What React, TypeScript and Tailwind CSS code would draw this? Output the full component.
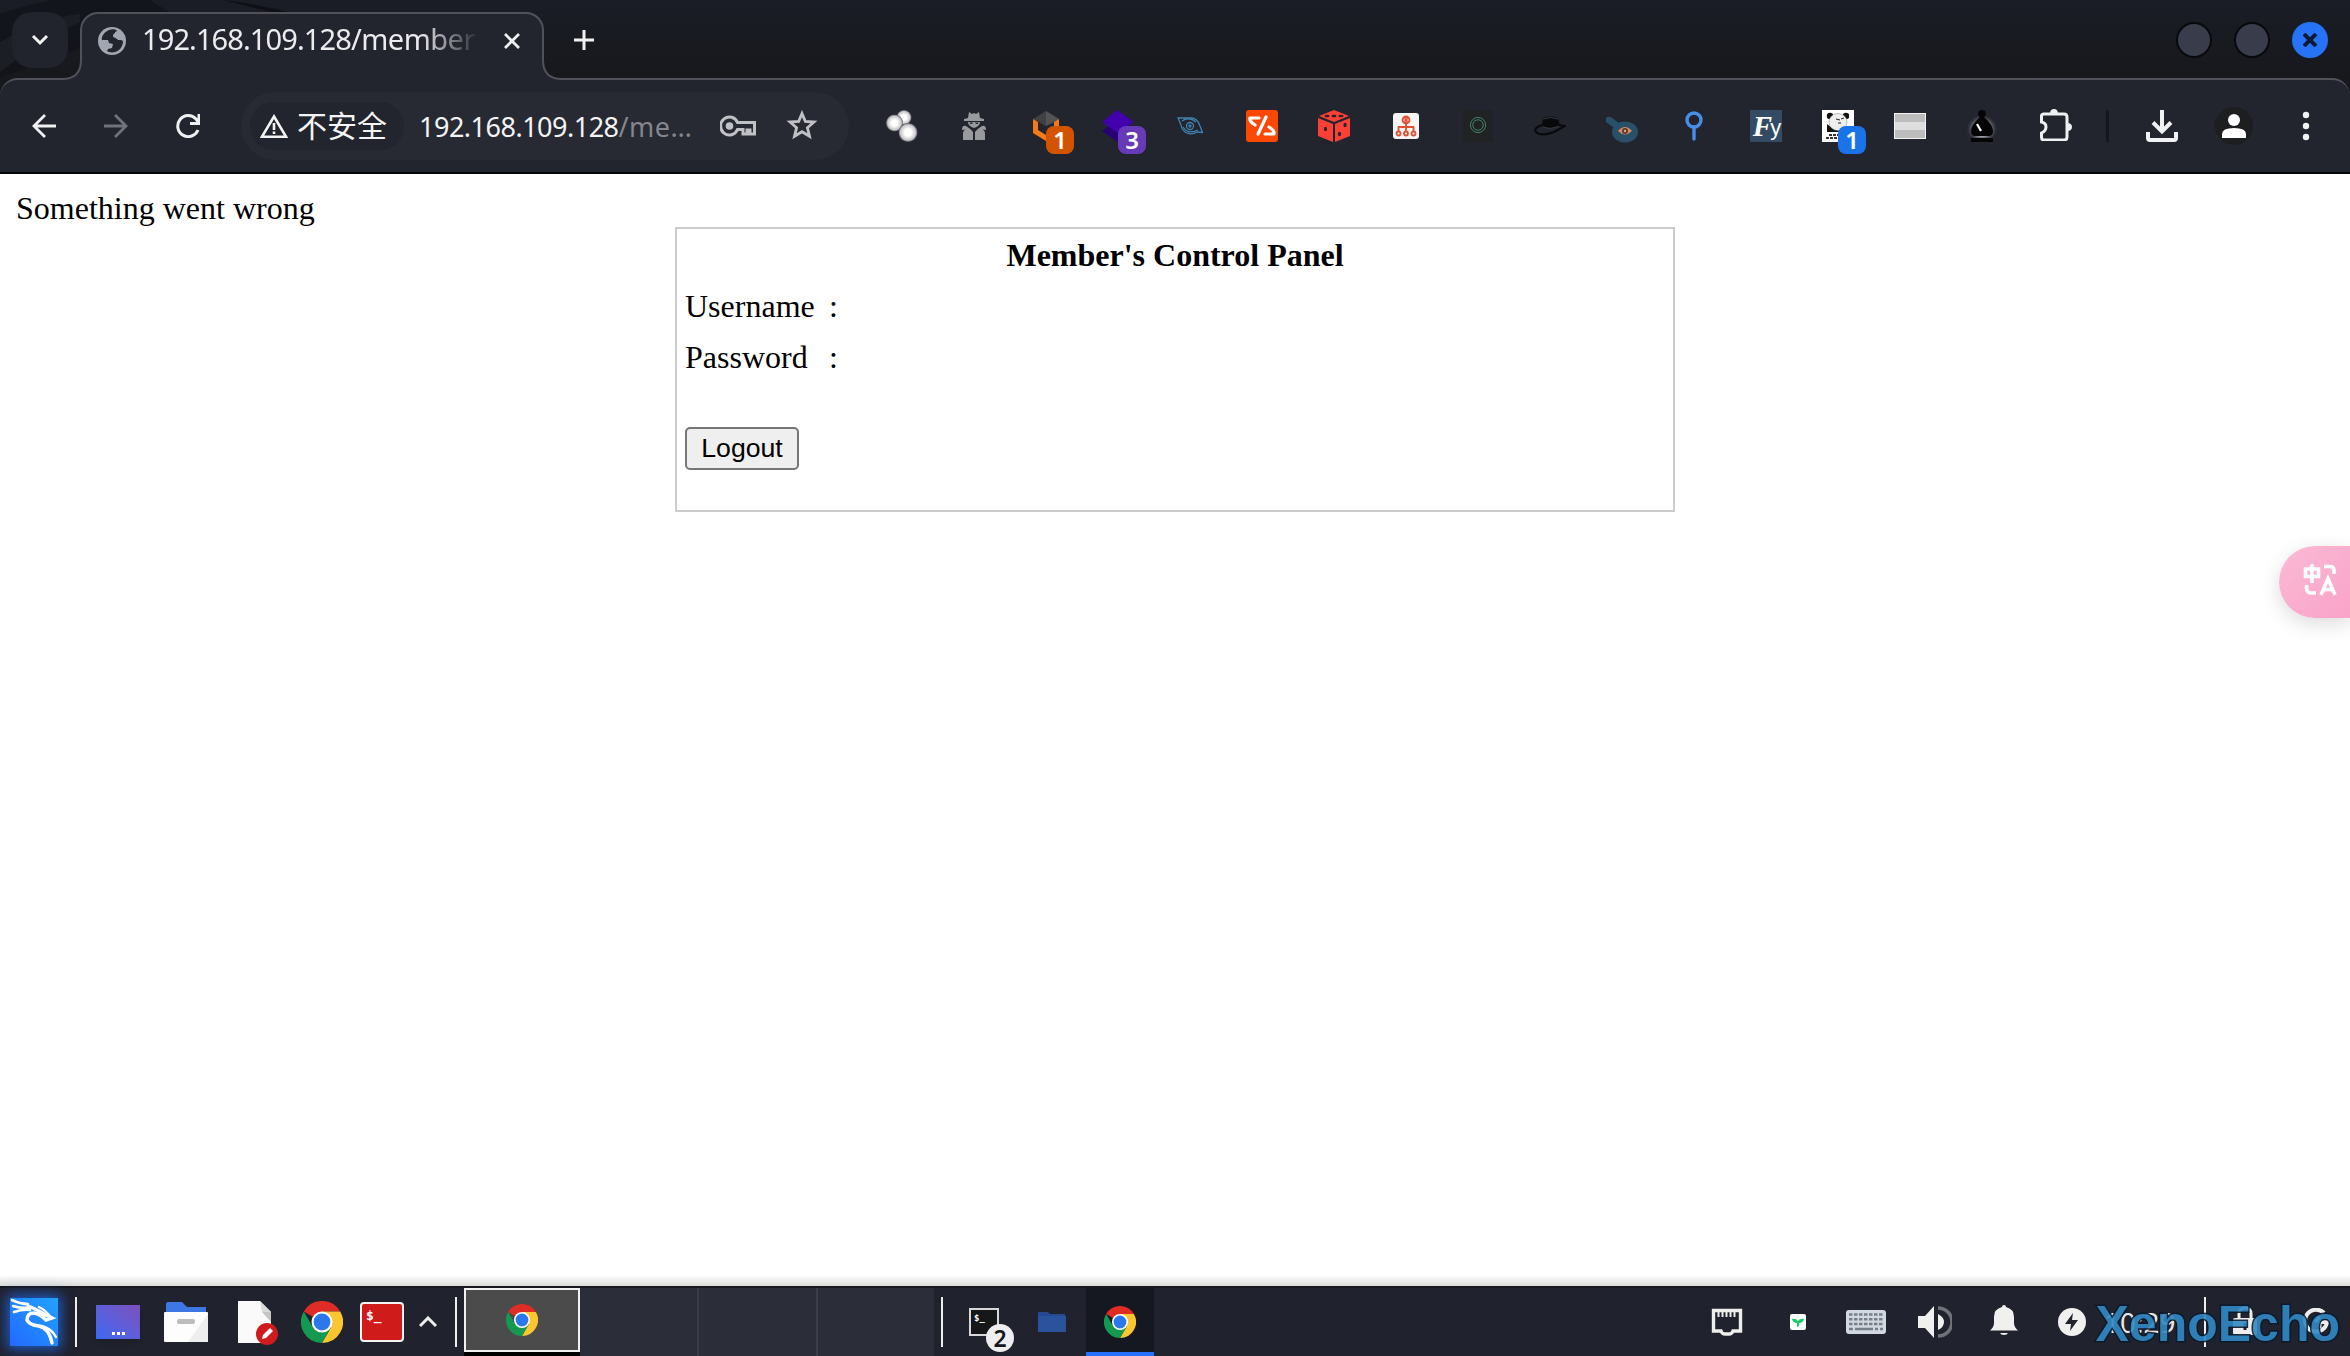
import type { ReactNode } from "react";

const UI = "font-['Noto_Sans','Noto_Sans_CJK_SC',sans-serif]";

function ChromeLogo({ className }: { className: string }) {
  return (
    <svg viewBox="0 0 48 48" className={className}>
      <path d="M24 24 L3.2 12 A24 24 0 0 1 44.8 12 L24 12Z" fill="#df2c25" />
      <path d="M44.8 12 A24 24 0 0 1 24 48 L34.4 30 L24 12Z" fill="#fdc52f" />
      <path d="M24 48 A24 24 0 0 1 3.2 12 L13.6 30 L34.4 30Z" fill="#149a50" />
      <circle cx="24" cy="24" r="12" fill="#fff" />
      <circle cx="24" cy="24" r="9.6" fill="#2b78ec" />
    </svg>
  );
}

function Slot({ children }: { children: ReactNode }) {
  return <div className="relative flex h-9 w-[72px] shrink-0 items-center justify-center">{children}</div>;
}

function Badge({ text, className }: { text: string; className: string }) {
  return (
    <span className={`absolute left-[36px] top-[18px] flex h-7 w-7 items-center justify-center rounded-lg text-[24px] font-semibold leading-none text-white ${className}`}>
      {text}
    </span>
  );
}

function TabStrip() {
  return (
    <header className="relative flex h-[78px] items-start overflow-visible bg-gradient-to-b from-[#1a1d26] to-[#17181c] pl-3 pt-3">
      <svg viewBox="0 0 330 78" className="absolute left-0 top-0 h-[78px] w-[330px]">
        <path d="M0 14 Q80 -14 150 0 L172 14 L0 78Z" fill="#111219" opacity="0.7" />
        <path d="M0 42 Q40 18 80 14 L80 22 Q40 40 0 72Z" fill="#20222a" opacity="0.7" />
        <path d="M222 0 Q262 4 294 14 L270 12 Q240 4 222 0Z" fill="#0f1015" />
      </svg>
      <button className="relative flex h-14 w-14 items-center justify-center rounded-[20px] bg-[#22242d]">
        <svg viewBox="0 0 18 12" className="h-3 w-[18px]" fill="none" stroke="#f1f1f1" strokeWidth="3">
          <path d="M2 2l7 7 7-7" />
        </svg>
      </button>
      <div className="relative z-10 ml-3 flex h-[68px] w-[464px] items-center rounded-t-[18px] border-2 border-b-0 border-[#515259] bg-[#22242e] pb-[13px] pl-4">
        <svg viewBox="0 0 20 20" className="absolute -left-[20px] bottom-0 h-5 w-5">
          <path d="M20 0 H22 V20 H0 V19 Q19 19 19 0Z" fill="#22242e" />
          <path d="M0 19 Q19 19 19 0" fill="none" stroke="#515259" strokeWidth="2" />
        </svg>
        <svg viewBox="0 0 20 20" className="absolute -right-[20px] bottom-0 h-5 w-5">
          <path d="M0 0 H1 Q1 19 20 19 V20 H0Z" fill="#22242e" />
          <path d="M1 0 Q1 19 20 19" fill="none" stroke="#515259" strokeWidth="2" />
        </svg>
        <svg viewBox="0 0 28 28" className="h-7 w-7 shrink-0">
          <circle cx="14" cy="14" r="14" fill="#a2a6b1" />
          <path d="M11 3 C14 2 18 2 19 4 C18 6 15 6 15 9 C15 11 17 10 19 12 C20 14 23 12 25 14 C25 20 21 24 17 25 C14 26 10 25 9 24 L10 22 L14 21 L15 17 L11 16 L10 13 L4 13 C3 10 6 5 11 3Z" fill="#22242e" />
          <path d="M17 5 L20 4 L22 7 L20 9 L17 9Z" fill="#a2a6b1" />
        </svg>
        <span className="-mt-[3px] ml-[16px] w-[338px] whitespace-nowrap text-[29px] leading-[40px] text-[#ececee] [mask-image:linear-gradient(to_right,black_82%,transparent_100%)]">
          <span className="tracking-[-0.9px]">192.168.109.128</span>
          <span className="tracking-[-0.5px]">/member</span>
        </span>
        <svg viewBox="0 0 16 16" className="ml-6 h-4 w-4 shrink-0" stroke="#f1f1f1" strokeWidth="2.8">
          <path d="M1 1l14 14M15 1L1 15" />
        </svg>
      </div>
      <svg viewBox="0 0 20 20" className="ml-[30px] mt-[18px] h-5 w-5" stroke="#f1f1f1" strokeWidth="3">
        <path d="M10 0v20M0 10h20" />
      </svg>
      <div className="ml-auto mr-[22px] mt-[10px] flex gap-[22px]">
        <span className="h-9 w-9 rounded-full border-2 border-[#08090c] bg-[#393d4b]" />
        <span className="h-9 w-9 rounded-full border-2 border-[#08090c] bg-[#393d4b]" />
        <span className="flex h-9 w-9 items-center justify-center rounded-full bg-[#2673f8]">
          <svg viewBox="0 0 14 14" className="h-[14px] w-[14px]" stroke="#0c1a35" strokeWidth="4">
            <path d="M1 1l12 12M13 1L1 13" />
          </svg>
        </span>
      </div>
    </header>
  );
}

function Extensions() {
  return (
    <div className="ml-[17px] flex">
      <Slot>
        <svg viewBox="0 0 32 32" className="h-8 w-8">
          <defs>
            <radialGradient id="ball">
              <stop offset="0.35" stopColor="#fff" />
              <stop offset="0.8" stopColor="#c9c9c9" />
              <stop offset="1" stopColor="#55565e" />
            </radialGradient>
          </defs>
          <circle cx="18" cy="7.500" r="7.500" fill="url(#ball)" />
          <circle cx="8.500" cy="13" r="8.500" fill="url(#ball)" />
          <circle cx="22" cy="22.500" r="9.500" fill="url(#ball)" />
        </svg>
      </Slot>
      <Slot>
        <svg viewBox="0 0 26 28" className="h-7 w-[26px]" fill="#999a9d">
          <path d="M7 6 L8 0 L11 2 L13 1 L15 2 L18 0 L19 6 L23 7 V9 H3 V7Z" />
          <path d="M7 10 H19 Q19 14 13 16 Q7 14 7 10Z" />
          <path d="M2 28 V22 Q2 18 5 17.500 L1 18 Q1 13 5 14 Q10 17 12 20 V28Z M24 28 V22 Q24 18 21 17.500 L25 18 Q25 13 21 14 Q16 17 14 20 V28Z" />
          <path d="M8.500 10.500h3.500l-1 1.500H9.500zM14 10.500h3.500l-1 1.500h-1.500z" fill="#22242e" />
        </svg>
      </Slot>
      <Slot>
        <svg viewBox="0 0 26 30" className="h-[30px] w-[26px]">
          <path d="M13 0 L26 8 L20 12 L13 15 L0 8Z" fill="#3f4143" />
          <path d="M13 0 V15 L26 8Z" fill="#515355" />
          <path d="M0 8 L5 11 V19 L13 24 V30 L0 22Z M26 8 L21 11 V19 L13 24 V30 L26 22Z" fill="#f67a17" />
        </svg>
        <Badge text="1" className="bg-[#d35400]" />
      </Slot>
      <Slot>
        <svg viewBox="0 0 32 32" className="h-8 w-8">
          <path d="M0 21 L16 10 L32 21 L16 32Z" fill="#290076" />
          <path d="M0 12 L15 0 L32 12 L16 23Z" fill="#4300ad" />
        </svg>
        <Badge text="3" className="bg-[#673ab7]" />
      </Slot>
      <Slot>
        <svg viewBox="0 0 26 18" className="h-[18px] w-[26px]" fill="none" stroke="#4083ae" strokeWidth="1.300">
          <path d="M1 1 H15 Q21 2 23 9 L25.500 15.500 L20 15 Q15 18 10 16 Q5 14 4 8Z" />
          <path d="M5 4 Q12 -1 19 5 M6 10 Q11 18 21 13" />
          <circle cx="13" cy="9" r="3.500" />
          <circle cx="13" cy="9" r="1" />
        </svg>
      </Slot>
      <Slot>
        <svg viewBox="0 0 32 32" className="h-8 w-8">
          <rect width="32" height="32" rx="3" fill="#fb4805" />
          <path d="M13 8 H4 Q3 11 9 15 M20 7 L12 24 M23 17 Q29 21 28 24 H19" fill="none" stroke="#fff" strokeWidth="3.200" strokeLinecap="round" strokeLinejoin="round" />
        </svg>
      </Slot>
      <Slot>
        <svg viewBox="0 0 32 32" className="h-8 w-8">
          <path d="M16 0 L31 6 L16 12 L1 6Z M0 8 L15 14 V32 L0 26Z M32 8 L17 14 V32 L32 26Z" fill="#fb4135" />
          <g fill="#22242e">
            <ellipse cx="9" cy="6" rx="2.500" ry="1.200" />
            <ellipse cx="16" cy="6" rx="2.500" ry="1.200" />
            <ellipse cx="23" cy="6" rx="2.500" ry="1.200" />
            <ellipse cx="7.500" cy="19" rx="1.600" ry="2.200" />
            <ellipse cx="21.500" cy="24" rx="1.600" ry="2.200" />
            <ellipse cx="27" cy="15" rx="1.600" ry="2.200" />
          </g>
        </svg>
      </Slot>
      <Slot>
        <svg viewBox="0 0 28 28" className="h-[28px] w-[28px]">
          <rect x="1" y="1" width="26" height="26" rx="3" fill="#f5f5f5" />
          <g fill="none" stroke="#e05136" strokeWidth="1.800">
            <circle cx="14" cy="8" r="3.500" fill="#e05136" />
            <path d="M14 11 V20 M6.500 20 V15 H21.500 V20" />
            <circle cx="6.500" cy="21.500" r="2" />
            <circle cx="14" cy="21.500" r="2" />
            <circle cx="21.500" cy="21.500" r="2" />
          </g>
          <path d="M13 6.500l-1.500 1.500 1.500 1.500M15 6.500l1.500 1.500-1.500 1.500" fill="none" stroke="#fff" strokeWidth="0.800" />
        </svg>
      </Slot>
      <Slot>
        <svg viewBox="0 0 30 32" className="h-8 w-[30px]" fill="none">
          <rect width="30" height="32" rx="3" fill="#202223" />
          <circle cx="15" cy="15" r="7.600" stroke="#438269" />
          <circle cx="15" cy="15" r="5.200" stroke="#438269" />
        </svg>
      </Slot>
      <Slot>
        <svg viewBox="0 0 32 20" className="h-5 w-8">
          <path d="M8 10 L9 2 Q17 -1 24 2 L26 10 Q16 14 8 10Z" fill="#08090b" />
          <path d="M8 9 Q-1 12 2 16 Q7 21 20 16 L31 10 L25 9" fill="none" stroke="#08090b" strokeWidth="2" />
          <path d="M9 3 Q17 0 24 3 M9 11 Q17 14 25 10" fill="none" stroke="#3c3e45" strokeWidth="0.900" />
        </svg>
      </Slot>
      <Slot>
        <svg viewBox="0 0 32 26" className="mt-2 h-[26px] w-8">
          <path d="M3 3 L10 8" stroke="#285069" strokeWidth="7" strokeLinecap="round" />
          <ellipse cx="19" cy="15" rx="13" ry="10.500" fill="#285069" />
          <path d="M12 14 Q19 6 26 14 Q19 21 12 14Z" fill="#d28a63" />
          <circle cx="19" cy="14" r="3" fill="#5b3a2c" />
          <circle cx="19" cy="14" r="1.200" fill="#eaa27c" />
        </svg>
      </Slot>
      <Slot>
        <svg viewBox="0 0 20 30" className="h-[30px] w-5" fill="none" stroke="#478ee6" strokeWidth="3.400" strokeLinecap="round">
          <circle cx="10" cy="9" r="7" />
          <path d="M10 16v12" />
        </svg>
      </Slot>
      <Slot>
        <span className="flex h-8 w-8 items-center justify-center bg-[#334b63] font-['Liberation_Serif',serif] text-[29px] font-bold italic leading-none tracking-[-2px] text-white">
          F<span className="mt-1 font-['Liberation_Sans',sans-serif] text-[22px] font-normal not-italic">y</span>
        </span>
      </Slot>
      <Slot>
        <svg viewBox="0 0 32 32" className="h-8 w-8">
          <rect width="32" height="32" fill="#fff" />
          <path d="M5 14 L10 18 L14 20 L22 18 V22 H5Z" fill="#111" />
          <circle cx="8" cy="6" r="3.200" fill="#111" />
          <circle cx="24" cy="6" r="3.200" fill="#111" />
          <ellipse cx="16" cy="12" rx="9" ry="8.500" fill="#eee" stroke="#999" strokeWidth="0.600" />
          <path d="M14 9l4 1M19 9l3-1M16 13h3" stroke="#222" />
          <path d="M7 25h18M4 28h22" stroke="#333" strokeWidth="1.800" strokeDasharray="3 1" />
        </svg>
        <Badge text="1" className="bg-[#1a73e8]" />
      </Slot>
      <Slot>
        <div className="flex h-[26px] w-8 flex-col border border-[#f2f2f2] bg-[#dedede]">
          <span className="h-2 bg-[#bdbdbd]" />
          <span className="mt-auto h-2 bg-[#bdbdbd]" />
        </div>
      </Slot>
      <Slot>
        <svg viewBox="0 0 32 36" className="h-9 w-8">
          <defs>
            <radialGradient id="halo">
              <stop offset="0.45" stopColor="#b7b8bb" />
              <stop offset="1" stopColor="#22242e" stopOpacity="0" />
            </radialGradient>
          </defs>
          <ellipse cx="16" cy="21" rx="16" ry="15" fill="url(#halo)" />
          <path d="M16 2 Q20 2 20 6 Q20 8 18 9 Q27 17 27 23 Q27 28 23 28 H9 Q5 28 5 23 Q5 17 14 9 Q12 8 12 6 Q12 2 16 2Z" fill="#050506" />
          <path d="M11 16l4 7" stroke="#fff" strokeWidth="2.200" />
          <path d="M5 32h22" stroke="#050506" strokeWidth="4" />
        </svg>
      </Slot>
      <Slot>
        <svg viewBox="0 0 32 32" className="mb-0.5 ml-1 h-8 w-8">
          <path d="M10 5 Q10 0 14 0 Q18 0 18 5Z M27 14 Q32 14 32 18 Q32 22 27 22Z" fill="#eef0f2" />
          <path d="M3 5 H24 Q27 5 27 8 V28 Q27 31 24 31 H4 Q1.500 31 1.500 28 V24 Q6 22 6 18 Q6 14 1.500 13 V7 Q1.500 5 4 5Z" fill="none" stroke="#eef0f2" strokeWidth="3" />
        </svg>
      </Slot>
    </div>
  );
}

function Toolbar() {
  return (
    <div className="bg-[#17181c]">
      <nav className="flex h-[96px] items-center rounded-t-[18px] border-b-2 border-t-2 border-b-[#050608] border-t-[#515259] bg-[#22242e] pl-8">
        <svg viewBox="0 0 24 24" className="h-6 w-6" fill="none" stroke="#eef0f2" strokeWidth="2.800">
          <path d="M24 12H3M13 1L2 12l11 11" />
        </svg>
        <svg viewBox="0 0 24 24" className="ml-12 h-6 w-6" fill="none" stroke="#71737a" strokeWidth="2.800">
          <path d="M0 12h21M11 1l11 11-11 11" />
        </svg>
        <svg viewBox="0 0 24 24" className="ml-12 h-6 w-6" fill="none" stroke="#eef0f2" strokeWidth="3">
          <path d="M22 16A10.500 10.500 0 1 1 20 5L23 9M23 0v9.500h-9" />
        </svg>
        <div className="ml-[41px] flex h-[68px] w-[608px] items-center rounded-full bg-[#272933] pl-[9px]">
          <div className="flex h-12 w-[154px] items-center rounded-full bg-[#22242e] pl-[10px]">
            <svg viewBox="0 0 28 24" className="h-6 w-7 shrink-0" fill="none" stroke="#f4f4f4" strokeWidth="2.600">
              <path d="M14 2.500L26 22.700H2z" />
              <path d="M14 9v7M14 17.500v2.500" />
            </svg>
            <span className="-mt-1 ml-[9px] whitespace-nowrap font-['Noto_Sans_CJK_SC',sans-serif] text-[30px] leading-none text-[#f4f4f4]">不安全</span>
          </div>
          <span className="ml-[15px] w-[280px] whitespace-nowrap text-[27px] leading-none text-[#f4f4f4]">
            <span className="tracking-[-0.5px]">192.168.109.128</span>
            <span className="tracking-[0.5px] text-[#85868d]">/me…</span>
          </span>
          <svg viewBox="0 0 36 22" className="ml-[21px] h-[22px] w-9" fill="none" stroke="#c0c1c5" strokeWidth="3">
            <path d="M17.500 7.500A8.800 9 0 1 0 17.500 14.500H23V19H27V15H30V19H34.500V7.500Z" />
            <circle cx="9.500" cy="11" r="3.800" fill="#c0c1c5" stroke="none" />
          </svg>
          <svg viewBox="0 0 32 30" className="-mt-0.5 ml-[30px] h-[30px] w-8" fill="none" stroke="#c0c1c5" strokeWidth="2.800">
            <path d="M16 3.500L19.300 11.300L28 12L21.400 17.700L23.500 26.300L16 21.700L8.500 26.300L10.600 17.700L4 12L12.700 11.300Z" />
          </svg>
        </div>
        <Extensions />
        <span className="ml-4 h-8 w-[3px] bg-[#14161e]" />
        <svg viewBox="0 0 32 32" className="ml-[37px] h-8 w-8" fill="none" stroke="#f1f2f3" strokeWidth="4">
          <path d="M16 0v21M7 12.500l9 9 9-9M2 22v6q0 2 2 2h24q2 0 2-2v-6" />
        </svg>
        <span className="ml-[37px] flex h-[38px] w-[38px] items-center justify-center rounded-full bg-[#1d1e1f]">
          <svg viewBox="0 0 24 24" className="h-6 w-6" fill="#fff">
            <circle cx="12" cy="6" r="6" />
            <path d="M0 24v-4q0-6 12-6t12 6v4z" />
          </svg>
        </span>
        <svg viewBox="0 0 8 30" className="ml-[49px] h-[30px] w-2" fill="#f1f2f3">
          <circle cx="4" cy="4" r="3.200" />
          <circle cx="4" cy="15" r="3.200" />
          <circle cx="4" cy="26" r="3.200" />
        </svg>
      </nav>
    </div>
  );
}

function Page() {
  return (
    <main className="relative h-[1112px] bg-white px-4 pt-4 font-['Liberation_Serif',serif] text-[32px] leading-[37px] text-black">
      <p>Something went wrong</p>
      <section className="mx-auto h-[285px] w-[1000px] border-2 border-[#ccc] px-2 pt-2">
        <h1 className="text-center font-bold">Member&apos;s Control Panel</h1>
        <div className="mt-[14px] flex">
          <span className="w-[144px]">Username</span>
          <span>:</span>
        </div>
        <div className="mt-[14px] flex">
          <span className="w-[144px]">Password</span>
          <span>:</span>
        </div>
        <button className="mt-[51px] flex h-[43px] w-[114px] items-center justify-center rounded-[5px] border-2 border-[#767676] bg-[#efefef] font-['Liberation_Sans',sans-serif] text-[26.670px] leading-none">
          Logout
        </button>
      </section>
      <div className="absolute right-0 top-[372px] flex h-[72px] w-[71px] items-center rounded-l-full bg-gradient-to-br from-[#fbbad6] to-[#f9a3c8] pb-1 pl-6 shadow-[0_6px_20px_rgba(0,0,0,0.14)]">
        <svg viewBox="0 0 34 34" className="h-[34px] w-[34px]" fill="none" stroke="#fff" strokeWidth="3.600">
          <path d="M2.500 6H15.500V13.500H2.500ZM9 1V20" />
          <path d="M21 3.500h6q4 0 4 4V11M3.500 22v3q0 5 5 5H13" />
          <path d="M18 32L25 15.500L32 32M20.500 26.500h9" />
        </svg>
      </div>
      <div className="absolute inset-x-0 bottom-0 h-[11px] bg-gradient-to-b from-transparent to-[#d9dad8]" />
    </main>
  );
}

function Divider({ className }: { className: string }) {
  return <span className={`h-[50px] w-0.5 shrink-0 bg-[#eeeef0] ${className}`} />;
}

function Taskbar() {
  return (
    <footer className="relative flex h-[70px] items-center border-t-2 border-[#16171d] bg-[#20222d] pl-[10px]">
      <div className="flex h-12 w-12 shrink-0 items-center justify-center bg-gradient-to-tr from-[#2568ff] to-[#24a1ff] shadow-[0_0_12px_3px_rgba(33,105,238,0.8)]">
        <svg viewBox="0 0 48 48" className="h-12 w-12" fill="none" stroke="#fff" strokeWidth="3.400" strokeLinecap="round">
          <path d="M2 2 Q10 6 18 6 M3 8 Q12 11 21 9 M4 14 Q13 11 20 12" strokeWidth="2.600" />
          <path d="M18 8 Q28 12 34 16 L42 20 L36 22 Q30 16 24 15 Q17 15 17 22 Q19 27 29 28 Q39 30 42 45" />
          <path d="M32 28 Q42 31 46 39 M29 9 Q36 12 41 20" strokeWidth="2.400" />
        </svg>
      </div>
      <Divider className="ml-[17px]" />
      <div className="ml-[19px] flex h-[34px] w-11 items-end justify-center gap-[2px] bg-gradient-to-tr from-[#3469f3] to-[#7a50bc] pb-[4px] shadow-md">
        <i className="h-[3px] w-[3px] bg-white" />
        <i className="h-[3px] w-[3px] bg-white" />
        <i className="h-[3px] w-[3px] bg-white" />
      </div>
      <svg viewBox="0 0 44 40" className="ml-6 h-10 w-11">
        <path d="M2 12V2Q2 0 4 0H18L23 5H42V12Z" fill="#3c77e4" />
        <rect y="10" width="44" height="30" rx="1" fill="#fdfdfd" />
        <path d="M44 12V40H24Z" fill="#eee" />
        <rect x="13" y="17" width="18" height="5" rx="2" fill="#bcbcbc" />
      </svg>
      <svg viewBox="0 0 42 45" className="ml-[29px] h-[45px] w-[42px]">
        <path d="M1 1H23L34 12V43H1Z" fill="#fafafa" />
        <path d="M23 1L34 12H25Z" fill="#d9d9d9" />
        <path d="M25 12H34V22Z" fill="#c5c5c5" />
        <circle cx="30" cy="34" r="11" fill="#cf1b1b" />
        <path d="M25 39l1-4 7-7 3 3-7 7z" fill="#fff" />
      </svg>
      <ChromeLogo className="ml-[22px] h-[42px] w-[42px]" />
      <div className="ml-[17px] h-10 w-11 rounded-sm border-2 border-[#f4f4f4] bg-[#d01b1b] pl-1 pt-1 font-['DejaVu_Sans_Mono',monospace] text-[13px] font-bold leading-[15px] text-white">$_</div>
      <svg viewBox="0 0 18 12" className="ml-[15px] h-3 w-[18px]" fill="none" stroke="#eee" strokeWidth="3">
        <path d="M1 10l8-8 8 8" />
      </svg>
      <Divider className="ml-[18px]" />
      <div className="ml-[7px] flex h-[68px] w-[116px] flex-col bg-black">
        <div className="flex h-16 items-center justify-center border-2 border-[#f1f1f1] bg-[#4b4b4b]">
          <ChromeLogo className="h-8 w-8" />
        </div>
      </div>
      <div className="flex h-[68px] w-[354px] bg-[#2b2d38]">
        <span className="h-full w-[119px] border-r-2 border-[#3b3d48]" />
        <span className="h-full w-[119px] border-r-2 border-[#3b3d48]" />
      </div>
      <Divider className="ml-[7px]" />
      <div className="relative ml-[26px] h-[28px] w-[30px] border-2 border-[#d8d8d8] bg-[#151718] pl-[3px] pt-0.5 font-['DejaVu_Sans_Mono',monospace] text-[9px] font-bold leading-[12px] text-white">
        $_
        <span className={`absolute left-[15px] top-[14px] flex h-7 w-7 items-center justify-center rounded-full bg-[#eee] text-[23px] font-semibold leading-none text-[#15161b] ${UI}`}>2</span>
      </div>
      <svg viewBox="0 0 30 22" className="ml-[38px] h-[22px] w-[30px]">
        <path d="M1 3V1H11L13 3H28V21H1Z" fill="#244991" />
        <path d="M1 5H29V20Q29 21 28 21H2Q1 21 1 20Z" fill="#2b539b" />
      </svg>
      <div className="ml-[19px] flex h-[68px] w-[68px] items-center justify-center border-b-4 border-[#2670fa] bg-[#161821] pt-1">
        <ChromeLogo className="h-8 w-8" />
      </div>
      <svg viewBox="0 0 32 28" className="ml-[557px] h-7 w-8" fill="none" stroke="#eeeeec" strokeWidth="3.400">
        <path d="M2.500 2.500H29.500V23H22Q21 26 18 26H14Q11 26 10 23H2.500Z" />
        <path d="M7.500 4v5M11.500 4v5M15.500 4v5M19.500 4v5M23.500 4v5" strokeWidth="2" />
      </svg>
      <svg viewBox="0 0 16 16" className="ml-[47px] h-4 w-4">
        <rect width="16" height="16" rx="2" fill="#f9fffb" />
        <path d="M2 5Q6 4 8 7Q10 4 14 5Q13 9 9 9Q10 12 7 13V9Q3 9 2 5Z" fill="#1ac96f" />
      </svg>
      <svg viewBox="0 0 40 24" className="ml-10 h-6 w-10">
        <rect width="40" height="24" rx="3" fill="#d2d8df" />
        <path d="M3 4.500H37M3 9.200H37M3 14H37" stroke="#777e89" strokeWidth="2.400" strokeDasharray="3.500 1.500" />
        <path d="M3 19h4M9 19h18M29 19h3M34 19h3" stroke="#777e89" strokeWidth="2.400" />
      </svg>
      <svg viewBox="0 0 34 32" className="ml-8 h-8 w-[34px]">
        <path d="M0 10H7L16 0V32L7 22H0Z M20 8Q26 11 26 16T20 24Z" fill="#f0f0ee" />
        <path d="M20 2A14 14 0 0 1 20 30" fill="none" stroke="#70727a" strokeWidth="3.500" />
      </svg>
      <svg viewBox="0 0 28 30" className="mb-1 ml-[38px] h-[30px] w-7" fill="#f0f0ee">
        <path d="M14 0Q16 0 16 2Q24 4 24 12V18Q24 22 28 25.500H0Q4 22 4 18V12Q4 4 12 2Q12 0 14 0ZM10 28H18Q17 30 14 30T10 28Z" />
      </svg>
      <svg viewBox="0 0 28 28" className="ml-10 h-7 w-7">
        <circle cx="14" cy="14" r="14" fill="#f0f0ee" />
        <path d="M15 5L7 16H13L12 23L20 12H14Z" fill="#20222d" />
      </svg>
      <span className={`ml-[18px] w-[74px] whitespace-nowrap text-[28px] leading-none text-[#e7e7e5] ${UI}`}>10:29</span>
      <Divider className="ml-[26px]" />
      <svg viewBox="0 0 24 30" className="mb-0.5 ml-[27px] h-[30px] w-6">
        <path d="M6 14V8Q6 2 12 2T18 8V14" fill="none" stroke="#eee" strokeWidth="3" />
        <rect y="12" width="24" height="17" rx="2" fill="#eee" />
        <path d="M12 17v7" stroke="#20222d" strokeWidth="3" />
      </svg>
      <svg viewBox="0 0 28 28" className="ml-[45px] h-7 w-7" fill="none" stroke="#eee" strokeWidth="4">
        <path d="M22 5A11 11 0 1 0 25 14H18" />
        <path d="M13 14l5-5M18 14v6" strokeWidth="3" />
      </svg>
      <span className="absolute right-[10px] top-[11px] whitespace-nowrap font-['Liberation_Sans',sans-serif] text-[50px] font-bold leading-[50px] text-[#3189c4] opacity-90 [paint-order:stroke_fill] [-webkit-text-stroke:3px_#091a2b]">XenoEcho</span>
    </footer>
  );
}

export default function App() {
  return (
    <div className={`flex h-[1356px] w-[2350px] flex-col overflow-hidden bg-white ${UI}`}>
      <TabStrip />
      <Toolbar />
      <Page />
      <Taskbar />
    </div>
  );
}
